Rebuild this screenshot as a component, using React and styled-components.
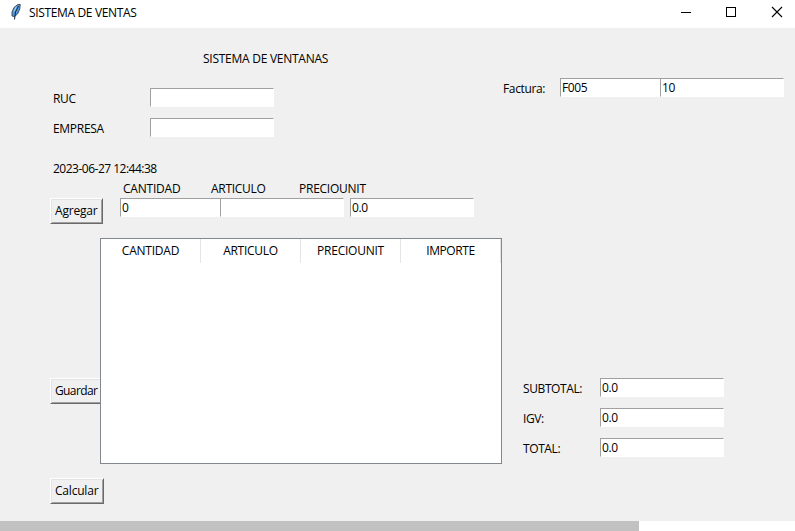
import React from "react";
import styled, { createGlobalStyle } from "styled-components";

const GlobalStyle = createGlobalStyle`
  * { box-sizing: border-box; }
  html, body { margin: 0; padding: 0; overflow: hidden; }
  body { font: 12px/16px "Open Sans", "Noto Sans", sans-serif; color: #000; }
`;

const Window = styled.div`
  display: flex;
  flex-direction: column;
  width: 795px;
  height: 531px;
  background: #f0f0f0;
`;

const TitleBar = styled.header`
  display: flex;
  height: 28px;
  flex: none;
  background: #fff;
`;

const AppIcon = styled.svg`
  width: 12px;
  height: 18px;
  margin: 3px 7px 0 10px;
`;

const Text = styled.span`
  display: block;
  white-space: pre;
  letter-spacing: ${(p) => p.$track || 0}px;
`;

const WindowTitle = styled(Text)`
  padding-top: 5px;
  flex: 1;
`;

const Controls = styled.svg`
  width: 115px;
  height: 28px;
  flex: none;
`;

const Body = styled.main`
  display: flex;
  flex: 1;
`;

const LeftPane = styled.section`
  width: 502px;
  flex: none;
`;

const RightPane = styled.section`
  flex: 1;
`;

const Heading = styled(Text)`
  margin: 23px 0 21px 203px;
`;

const FieldRow = styled.div`
  display: grid;
  grid-template-columns: ${(p) => p.$label}px auto;
  justify-content: start;
  height: 30px;
  padding-left: ${(p) => p.$left}px;

  & > span { padding-top: 3px; }
`;

const Entry = styled.div`
  width: ${(p) => p.$width || 124}px;
  height: 19px;
  padding-left: 1px;
  border: 1px solid #fff;
  border-top-color: #a0a0a0;
  border-left-color: #a0a0a0;
  border-right-width: ${(p) => (p.$joined ? 0 : 1)}px;
  background: #fff;
  line-height: 17px;
  letter-spacing: -0.35px;
`;

const EntryGroup = styled.div`
  display: flex;
`;

const Timestamp = styled(Text)`
  margin: 13px 0 4px 53px;
`;

const ColumnLabels = styled.div`
  display: grid;
  grid-template-columns: 88px 88px auto;
  justify-content: start;
  padding-left: 123px;
  height: 17px;
`;

const ItemRow = styled.div`
  display: grid;
  grid-template-columns: 70px 230px 124px;
  height: 40px;
  padding-left: 50px;
`;

const Button = styled.div`
  width: ${(p) => p.$width || 53}px;
  height: 26px;
  border: 1px solid #696969;
  border-top-color: #fff;
  border-left-color: #fff;
  box-shadow: inset 1px 1px #e3e3e3, inset -1px -1px #a0a0a0;
  padding: 4px 0 0 4px;
  white-space: nowrap;
  letter-spacing: ${(p) => p.$track || 0}px;
`;

const TableRow = styled.div`
  display: grid;
  grid-template-columns: 50px 402px;
  padding-left: 50px;
  height: 240px;
`;

const SaveSlot = styled.div`
  padding-top: 140px;
`;

const Table = styled.div`
  height: 226px;
  border: 1px solid #828790;
  background: #fff;
`;

const TableHead = styled.div`
  display: grid;
  grid-template-columns: repeat(4, 100px);
  height: 24px;
`;

const HeadCell = styled.div`
  display: flex;
  justify-content: center;
  border-right: 1px solid #e5e5e5;
  padding-top: 4px;
`;

const Footer = styled.div`
  padding-left: 50px;
`;

const Invoice = styled.div`
  display: grid;
  grid-template-columns: 57px auto;
  justify-content: start;
  padding: 50px 0 0 1px;
  height: 350px;

  & > span { padding-top: 3px; }
`;

const ScrollTrack = styled.div`
  height: 10px;
  flex: none;
  background: #fff;
`;

const ScrollThumb = styled.div`
  width: 639px;
  height: 10px;
  background: #c1c1c1;
`;

const columns = [
  ["CANTIDAD", -0.22],
  ["ARTICULO", -0.28],
  ["PRECIOUNIT", -0.25],
  ["IMPORTE", -0.4],
];

export default function App() {
  return (
    <Window>
      <GlobalStyle />
      <TitleBar>
        <AppIcon viewBox="0 0 12 18">
          <path d="M2 13 L2 9 L4 4.5 L7.5 1.7 L10.2 1.3 L9.8 6 L7.5 11 L4.5 13.5Z" fill="#4c9be4" stroke="#3b3f46" strokeWidth="0.9" />
          <path d="M8.5 3 L5.5 9 L4.5 16.5" fill="none" stroke="#152238" strokeWidth="1" />
          <path d="M6.3 3.6 L4 8.4" stroke="#b8d6ef" strokeWidth="1" />
        </AppIcon>
        <WindowTitle $track={-0.35}>SISTEMA DE VENTAS</WindowTitle>
        <Controls viewBox="0 0 115 28" fill="none" stroke="#000">
          <path d="M1 12.5H11" />
          <rect x="46.5" y="7.5" width="9" height="9" />
          <path d="M92 7L102 17M102 7L92 17" strokeWidth="1.1" />
        </Controls>
      </TitleBar>
      <Body>
        <LeftPane>
          <Heading $track={-0.26}>SISTEMA DE VENTANAS</Heading>
          <FieldRow $left={53} $label={97}>
            <Text $track={-0.3}>RUC</Text>
            <Entry />
          </FieldRow>
          <FieldRow $left={53} $label={97}>
            <Text $track={-0.3}>EMPRESA</Text>
            <Entry />
          </FieldRow>
          <Timestamp $track={-0.5}>2023-06-27 12:44:38</Timestamp>
          <ColumnLabels>
            {columns.slice(0, 3).map(([name, track]) => (
              <Text key={name} $track={track}>{name}</Text>
            ))}
          </ColumnLabels>
          <ItemRow>
            <Button $track={-0.2}>Agregar</Button>
            <EntryGroup>
              <Entry $width={100} $joined>0</Entry>
              <Entry />
            </EntryGroup>
            <Entry>0.0</Entry>
          </ItemRow>
          <TableRow>
            <SaveSlot>
              <Button $track={-0.62}>Guardar</Button>
            </SaveSlot>
            <Table>
              <TableHead>
                {columns.map(([name, track]) => (
                  <HeadCell key={name}>
                    <Text $track={track}>{name}</Text>
                  </HeadCell>
                ))}
              </TableHead>
            </Table>
          </TableRow>
          <Footer>
            <Button $width={54} $track={-0.2}>Calcular</Button>
          </Footer>
        </LeftPane>
        <RightPane>
          <Invoice>
            <Text $track={-0.35}>Factura:</Text>
            <EntryGroup>
              <Entry $width={100} $joined>F005</Entry>
              <Entry>10</Entry>
            </EntryGroup>
          </Invoice>
          <FieldRow $left={21} $label={77}>
            <Text $track={-0.4}>SUBTOTAL:</Text>
            <Entry>0.0</Entry>
          </FieldRow>
          <FieldRow $left={21} $label={77}>
            <Text $track={-0.4}>IGV:</Text>
            <Entry>0.0</Entry>
          </FieldRow>
          <FieldRow $left={21} $label={77}>
            <Text $track={-0.4}>TOTAL:</Text>
            <Entry>0.0</Entry>
          </FieldRow>
        </RightPane>
      </Body>
      <ScrollTrack>
        <ScrollThumb />
      </ScrollTrack>
    </Window>
  );
}
